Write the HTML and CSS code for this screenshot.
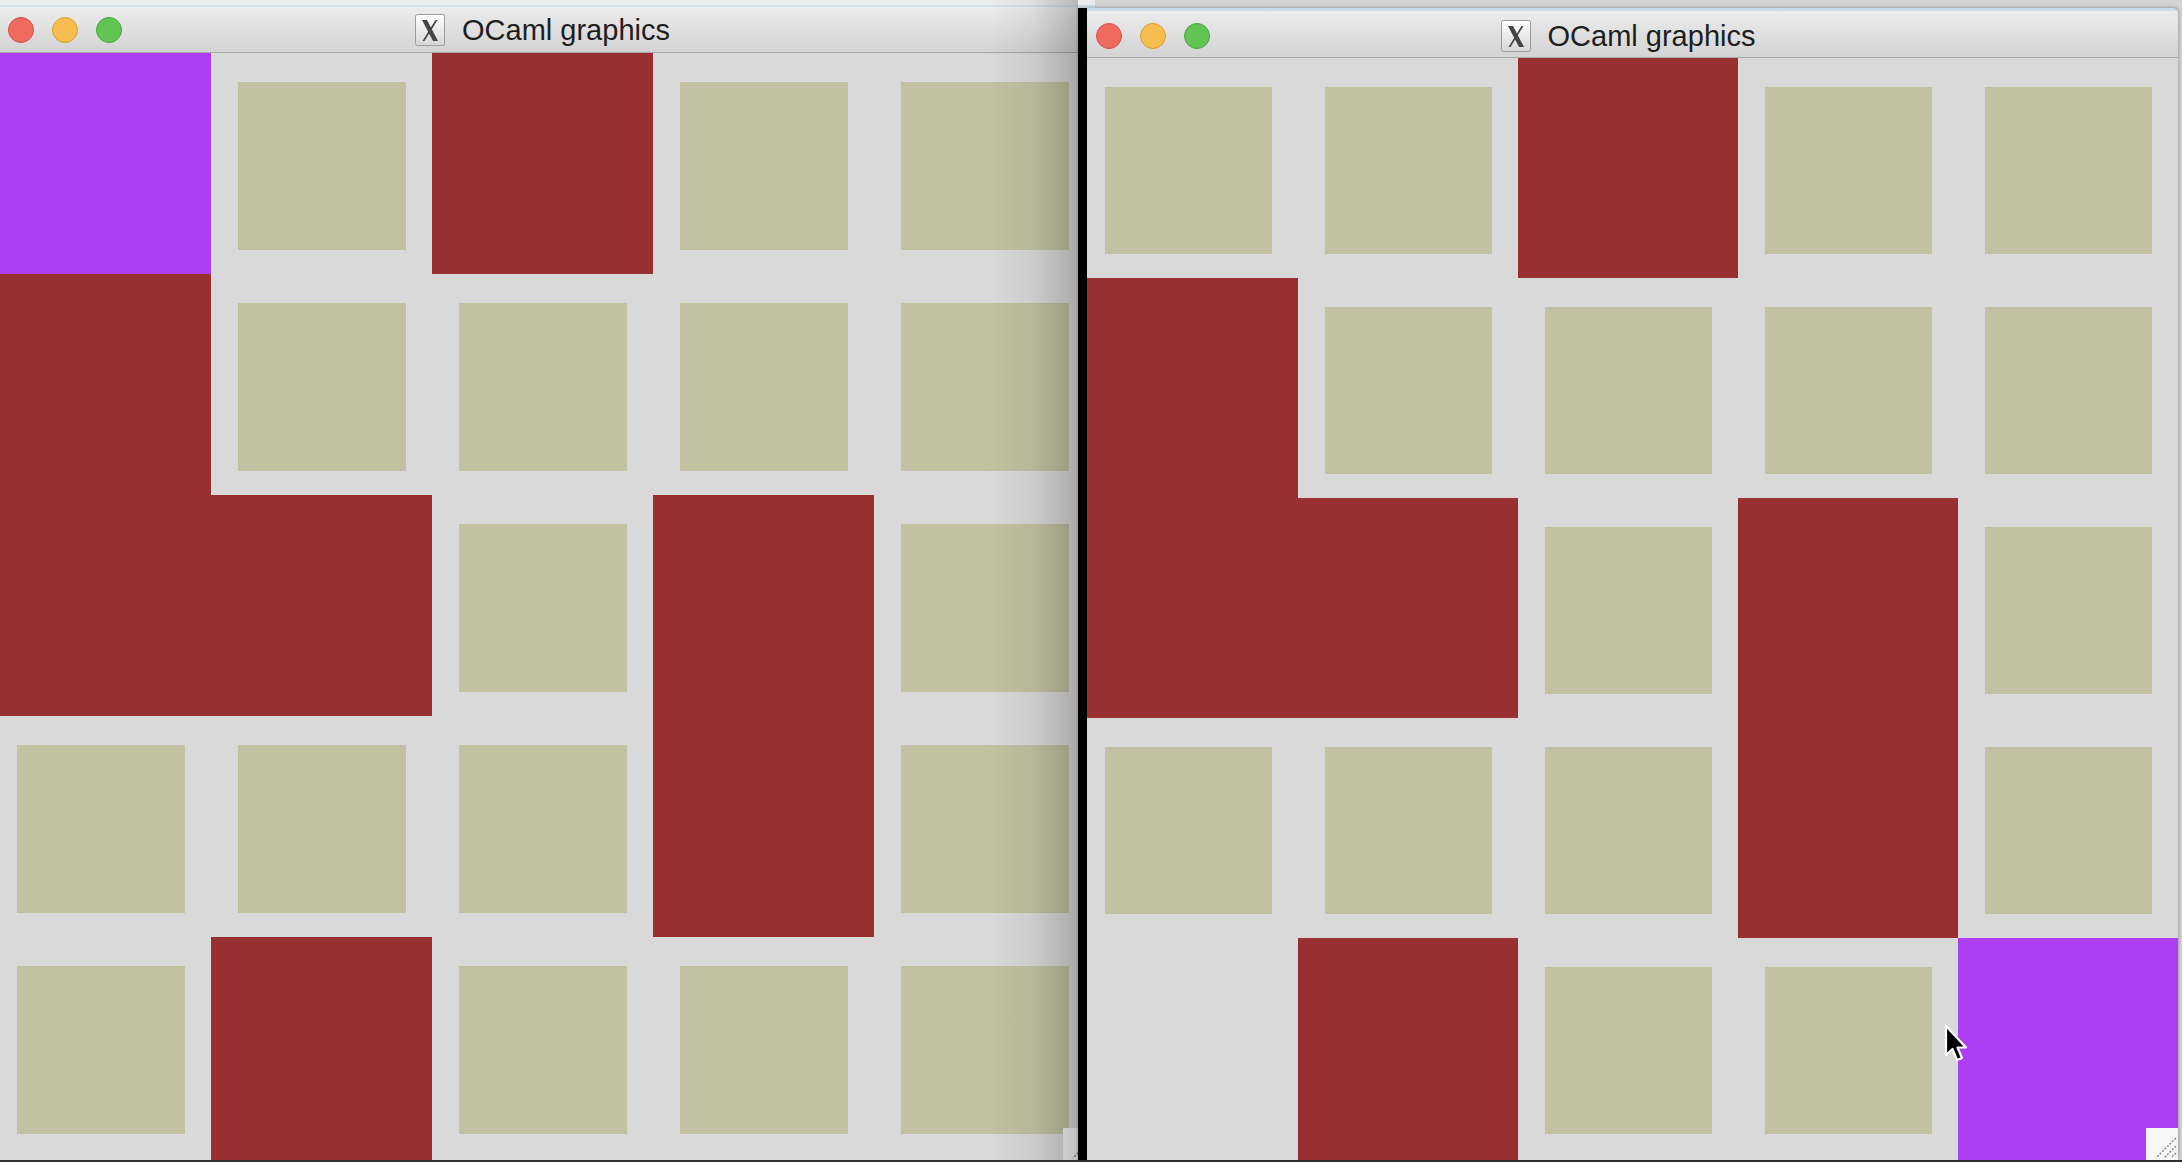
FILE: index.html
```html
<!DOCTYPE html>
<html>
<head>
<meta charset="utf-8">
<title>OCaml graphics</title>
<link rel="stylesheet" href="styles.css">
</head>
<body>
<div class="window win-left">
  <div class="titlebar">
    <div class="lights"><span class="light close"></span><span class="light min"></span><span class="light max"></span></div>
    <div class="title">
      <svg class="xicon" viewBox="0 0 30 32" width="30" height="32">
        <defs><linearGradient id="xg1" x1="0" y1="0" x2="0" y2="1"><stop offset="0" stop-color="#ffffff"/><stop offset="1" stop-color="#d6d6d6"/></linearGradient></defs>
        <rect x="0.5" y="0.5" width="29" height="31" rx="2" fill="url(#xg1)" stroke="#9c9c9c"/>
        <polygon points="7,6 12,6 23,27 18,27" fill="#444"/>
        <polygon points="20.5,6 22.5,6 9.5,27 7.5,27" fill="#444"/>
      </svg>
      <span class="title-text">OCaml graphics</span>
    </div>
    <div></div>
  </div>
  <div class="grid grid-left">
    <div class="cell p"></div><div class="cell t"></div><div class="cell r"></div><div class="cell t"></div><div class="cell t"></div>
    <div class="cell r"></div><div class="cell t"></div><div class="cell t"></div><div class="cell t"></div><div class="cell t"></div>
    <div class="cell r"></div><div class="cell r"></div><div class="cell t"></div><div class="cell r"></div><div class="cell t"></div>
    <div class="cell t"></div><div class="cell t"></div><div class="cell t"></div><div class="cell r"></div><div class="cell t"></div>
    <div class="cell t"></div><div class="cell r"></div><div class="cell t"></div><div class="cell t"></div><div class="cell t"></div>
  </div>
  <div class="grip">
    <svg viewBox="0 0 32 32" width="32" height="32"><path d="M30 10 L10 30 M30 18 L18 30 M30 25 L25 30" stroke="#8a8a8a" stroke-width="1.5" stroke-dasharray="2 1.5"/></svg>
  </div>
  <div class="shade"></div>
</div>

<div class="window win-right">
  <div class="titlebar">
    <div class="lights"><span class="light close"></span><span class="light min"></span><span class="light max"></span></div>
    <div class="title">
      <svg class="xicon" viewBox="0 0 30 32" width="30" height="32">
        <defs><linearGradient id="xg2" x1="0" y1="0" x2="0" y2="1"><stop offset="0" stop-color="#ffffff"/><stop offset="1" stop-color="#d6d6d6"/></linearGradient></defs>
        <rect x="0.5" y="0.5" width="29" height="31" rx="2" fill="url(#xg2)" stroke="#9c9c9c"/>
        <polygon points="7,6 12,6 23,27 18,27" fill="#444"/>
        <polygon points="20.5,6 22.5,6 9.5,27 7.5,27" fill="#444"/>
      </svg>
      <span class="title-text">OCaml graphics</span>
    </div>
    <div></div>
  </div>
  <div class="grid grid-right">
    <div class="cell t"></div><div class="cell t"></div><div class="cell r"></div><div class="cell t"></div><div class="cell t"></div>
    <div class="cell r"></div><div class="cell t"></div><div class="cell t"></div><div class="cell t"></div><div class="cell t"></div>
    <div class="cell r"></div><div class="cell r"></div><div class="cell t"></div><div class="cell r"></div><div class="cell t"></div>
    <div class="cell t"></div><div class="cell t"></div><div class="cell t"></div><div class="cell r"></div><div class="cell t"></div>
    <div class="cell e"></div><div class="cell r"></div><div class="cell t"></div><div class="cell t"></div><div class="cell p"></div>
  </div>
  <div class="grip">
    <svg viewBox="0 0 32 32" width="32" height="32"><path d="M30 10 L10 30 M30 18 L18 30 M30 25 L25 30" stroke="#8a8a8a" stroke-width="1.5" stroke-dasharray="2 1.5"/></svg>
  </div>
  <div class="edge"></div>
</div>

<svg class="cursor" viewBox="0 0 26 40" width="26" height="40">
  <path d="M2 2 L2 31 L8.5 25 L13 36 L18 34 L13.5 23.5 L22 23.5 Z" fill="#000" stroke="#fff" stroke-width="2.2" stroke-linejoin="round"/>
</svg>
</body>
</html>
```

FILE: styles.css
```css
html, body {
  margin: 0;
  padding: 0;
}
body {
  width: 2182px;
  height: 1162px;
  overflow: hidden;
  position: relative;
  background: linear-gradient(to top, #2c3034 0, #2c3034 2px, #d3d3d3 2px);
  font-family: "Liberation Sans", Arial, sans-serif;
}

.window {
  position: absolute;
  background: #d9d9d9;
  overflow: hidden;
  display: flex;
  flex-direction: column;
}

.win-left {
  left: -10px;
  top: 0;
  bottom: 2px;
  width: 1105px;
  padding-top: 5px;
  box-sizing: border-box;
  background: linear-gradient(#ececec 0, #ececec 5px, #d9d9d9 5px);
}

.win-right {
  left: 1078px;
  top: 8px;
  bottom: 2px;
  width: 1100px;
  border-right: 1px solid #b2b2b2;
  border-top-right-radius: 6px;
  box-shadow: 0 -1px 3px rgba(0, 0, 0, 0.25);
}

.titlebar {
  flex: none;
  display: grid;
  grid-template-columns: 1fr auto 1fr;
  align-items: center;
  background: linear-gradient(#ececec, #d3d3d3);
  border-top: 2px solid #d2e4f0;
  border-bottom: 1px solid #a9a9a9;
}
.win-left .titlebar {
  height: 45px;
}
.win-right .titlebar {
  height: 43px;
  padding-top: 3px;
  border-top-width: 3px;
  border-top-color: #c6def0;
}

.lights {
  display: flex;
  gap: 18px;
  padding-left: 18px;
}
.light {
  width: 26px;
  height: 26px;
  border-radius: 50%;
  box-sizing: border-box;
  border: 1px solid;
}
.light.close { background: #ee6a5f; border-color: #d4514a; }
.light.min { background: #f5be4f; border-color: #d9a035; }
.light.max { background: #61c454; border-color: #4aa63c; }

.title {
  display: flex;
  align-items: center;
  gap: 17px;
}
.xicon {
  display: block;
}
.title-text {
  font-size: 29px;
  color: #1e1e1e;
  line-height: 1;
  padding-top: 1px;
}

.grid {
  flex: 1;
  display: grid;
  background: #d9d9d9;
}
.grid-left {
  grid-template-columns: repeat(5, 221px);
  grid-template-rows: repeat(4, 221px) 1fr;
}
.grid-right {
  grid-template-columns: repeat(5, 220px);
  grid-template-rows: repeat(4, 220px) 1fr;
}

.cell.t {
  padding: 29px 26px 0 27px;
  height: 168px;
  background: #c2c2a2 content-box;
}
.grid-right .cell.t {
  height: 167px;
}
.cell.r {
  background: #983032;
}
.cell.p {
  background: #ae3ef2;
}

.grip {
  position: absolute;
  right: 0;
  bottom: 0;
  width: 32px;
  height: 32px;
  background: #f6f6f6;
}
.grip svg {
  display: block;
}

.shade {
  position: absolute;
  top: 0;
  bottom: 0;
  right: 17px;
  width: 90px;
  background: linear-gradient(to right, rgba(0, 0, 0, 0), rgba(0, 0, 0, 0.06) 50%, rgba(0, 0, 0, 0.22));
}

.edge {
  position: absolute;
  left: 0;
  top: 0;
  bottom: 0;
  width: 9px;
  background: #000;
}

.cursor {
  position: absolute;
  left: 1944px;
  top: 1024px;
}
```
